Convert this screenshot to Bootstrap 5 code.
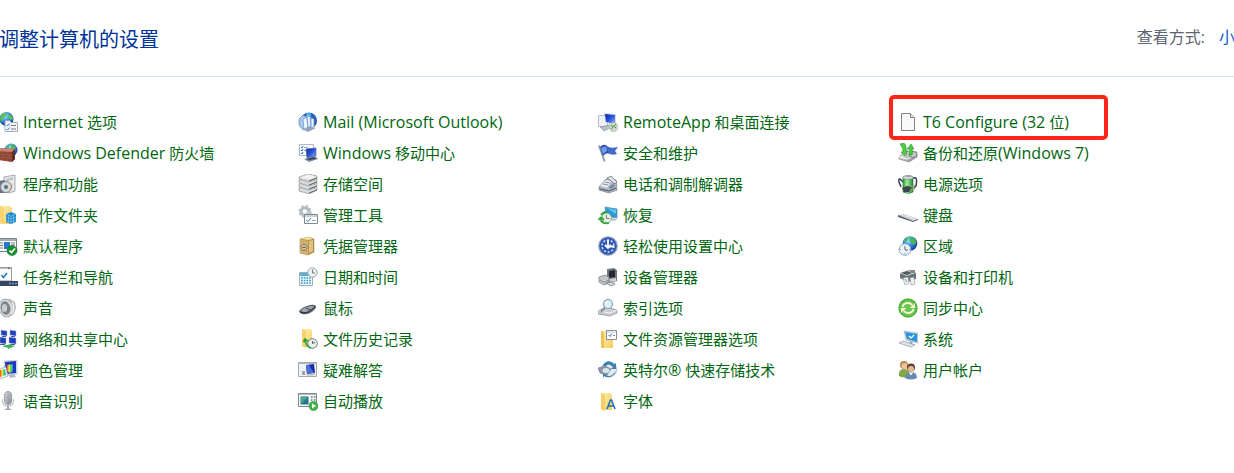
<!DOCTYPE html>
<html lang="zh-CN">
<head>
<meta charset="utf-8">
<meta name="viewport" content="width=device-width, initial-scale=1">
<title>控制面板</title>
<link href="https://cdn.jsdelivr.net/npm/bootstrap@5.3.0/dist/css/bootstrap.min.css" rel="stylesheet">
<style>
  body { font-family: "Open Sans", "Noto Sans CJK SC", sans-serif; font-size: 15px; overflow-x: hidden; }
  .panel-head { height: 77px; border-bottom: 1px solid #d6e5f3; overflow: hidden; }
  .panel-head h1 { font-size: 20px; line-height: 24px; color: #003399; margin-left: -1px; padding-top: 3px; }
  .view-by { font-size: 16px; line-height: 24px; color: #5a6472; gap: 14px; margin-right: -1px; padding-bottom: 2px; }
  .view-by a { color: #0a5bc8; }
  .cpl-grid { display: grid; grid-template-columns: repeat(auto-fill, 300px); grid-auto-rows: 31px; margin: 30px 0 0 -2px; }
  .cpl-grid a { color: #00660f; gap: 5px; line-height: 30px; }
  .cpl-grid a:hover { text-decoration: underline !important; }
  .cpl-grid svg { width: 20px; height: 20px; flex: none; }
  .latin { font-size: 16px; }
  .marked::after { content: ""; position: absolute; left: -9px; top: -12px; width: 219px; height: 45px; border: 4px solid #ff2418; border-radius: 5px; pointer-events: none; }
</style>
</head>
<body class="bg-white">
<svg width="0" height="0" class="position-absolute" aria-hidden="true">
  <defs>
    <radialGradient id="globe" cx=".4" cy=".3" r=".7"><stop offset="0" stop-color="#9be0ff"/><stop offset=".5" stop-color="#2f8fdc"/><stop offset="1" stop-color="#123c9c"/></radialGradient>
    <linearGradient id="metal" x1="0" y1="0" x2="1" y2="1"><stop offset="0" stop-color="#f4f4f4"/><stop offset="1" stop-color="#85888c"/></linearGradient>
    <linearGradient id="screen" x1="0" y1="0" x2="1" y2="1"><stop offset="0" stop-color="#0a1f9e"/><stop offset=".5" stop-color="#2b56dc"/><stop offset="1" stop-color="#8db8ff"/></linearGradient>
    <linearGradient id="folder" x1="0" y1="0" x2="1" y2="1"><stop offset="0" stop-color="#fff0b4"/><stop offset="1" stop-color="#f5cc5c"/></linearGradient>
    <linearGradient id="rainbow"><stop offset="0" stop-color="#f33"/><stop offset=".35" stop-color="#fe3"/><stop offset=".65" stop-color="#3d6"/><stop offset="1" stop-color="#38f"/></linearGradient>
    <linearGradient id="green"><stop offset="0" stop-color="#2d9a36"/><stop offset=".4" stop-color="#a5eaa0"/><stop offset="1" stop-color="#238a30"/></linearGradient>
  </defs>
</svg>

<header class="panel-head d-flex justify-content-between align-items-center">
  <h1 class="mb-0 fw-normal text-nowrap">调整计算机的设置</h1>
  <div class="view-by d-flex text-nowrap"><span>查看方式:</span><a href="#" class="text-decoration-none">小</a></div>
</header>

<main>
<ul class="cpl-grid list-unstyled">
  <li><a href="#" class="d-flex align-items-center text-decoration-none text-nowrap">
    <svg viewBox="0 0 20 20"><circle cx="8.500" cy="7" r="7" fill="url(#globe)"/><path d="M3 3q3-3 6-2l-1 3-3 2-1 4-2-2zM10 2l4 2 1 4-4-1z" fill="#63bd57"/><path d="M7 8.500h5l1 2h6.500v9H7z" fill="#f2f5f8" stroke="#8d9aa8" stroke-width=".8"/><path d="M8.500 13l1 1 2-2.500M8.500 17l1 1 2-2.500" stroke="#2879d0" fill="none"/><path d="M13 13.500h5M13 17h5" stroke="#778"/></svg>
    <span><span class="latin">Internet</span> 选项</span></a></li>
  <li><a href="#" class="d-flex align-items-center text-decoration-none text-nowrap">
    <svg viewBox="0 0 20 20"><circle cx="11" cy="8.500" r="8" fill="url(#globe)"/><path d="M13 1q4 2 5 6l-2 5-3-4zM4 4l4-3 1 3z" fill="#2f60b4"/><path d="M1 7l4-4 3 2v11l-3 2-4-5z" fill="#a8c7ea" stroke="#5e84b8" stroke-width=".7"/><path d="M5 7l4-2 1 10-4 3zM9 5l3-1 1 10-3 2zM13 6l3 1v8l-3 2z" fill="#e8f4ff" stroke="#6f94c6" stroke-width=".7"/><path d="M4 17l9-2 5 1-8 4z" fill="#94a4b8"/></svg>
    <span class="latin">Mail (Microsoft Outlook)</span></a></li>
  <li><a href="#" class="d-flex align-items-center text-decoration-none text-nowrap">
    <svg viewBox="0 0 20 20"><path d="M.5 3.500h9v11h-9z" fill="#eef1f7" stroke="#b6bdcb"/><path d="M6 1l12 1v11L7 11z" fill="#d8dce8"/><path d="M7 2l10 1v9L8 10z" fill="url(#screen)"/><path d="M2 15l9-2 3 2-8 4z" fill="#b9bfca" stroke="#858b98" stroke-width=".6"/><circle cx="15.500" cy="15" r="4.500" fill="#cfd4cf" stroke="#a2a8a2" stroke-width=".6"/><path d="M13 13l2.200 2-2.200 2M18 12l-2.200 2 2.200 2" fill="none" stroke="#3c9c36"/></svg>
    <span><span class="latin">RemoteApp</span> 和桌面连接</span></a></li>
  <li class="position-relative marked"><a href="#" class="d-flex align-items-center text-decoration-none text-nowrap">
    <svg viewBox="0 0 20 20"><path d="M3.500 1.500h9l4 4v13h-13z" fill="#f8f8f8" stroke="#858585"/><path d="M12.500 1.500v4h4" fill="#e4e4e4" stroke="#858585"/></svg>
    <span><span class="latin">T6 Configure (32</span> 位<span class="latin">)</span></span></a></li>

  <li><a href="#" class="d-flex align-items-center text-decoration-none text-nowrap">
    <svg viewBox="0 0 20 20"><circle cx="13" cy="7" r="6.500" fill="url(#globe)"/><path d="M13 1l5 3-2 5-3-3zM8 4l3-3v4z" fill="#57b74d"/><path d="M0 8l3-3 14 1v10l-3 3-14-2z" fill="#8d4535"/><path d="M0 8l3-3 14 1-3 3z" fill="#c98672"/><path d="M14 9l3-3v10l-3 3z" fill="#612d24"/><path d="M0 11l14 1M0 14l14 1M4 8v3M9 9v3M6 12v3M11 12v3M4 15v2M9 15v3" stroke="#a8604f" stroke-width=".6"/></svg>
    <span><span class="latin">Windows Defender</span> 防火墙</span></a></li>
  <li><a href="#" class="d-flex align-items-center text-decoration-none text-nowrap">
    <svg viewBox="0 0 20 20"><path d="M1.500 1.500h14v11h-14z" fill="#f7faff" stroke="#adb8c8"/><path d="M3 4l1 1 1-2M3 7l1 1 1-2M3 10l1 1 1-2" stroke="#2871d0" fill="none"/><path d="M6 4.500h4M6 7.500h3" stroke="#8cb0d8"/><path d="M8 6l10-1v8l-9 2z" fill="url(#screen)" stroke="#53617c" stroke-width=".7"/><path d="M6 16l11-3 3 3-9 3z" fill="#7d8ba2"/><path d="M8 16l8-2 2 2-7 1z" fill="#3a4964"/></svg>
    <span><span class="latin">Windows</span> 移动中心</span></a></li>
  <li><a href="#" class="d-flex align-items-center text-decoration-none text-nowrap">
    <svg viewBox="0 0 20 20"><path d="M0 3l1.500-1 6 16-1.500 1z" fill="#8b95a5"/><path d="M2 4q4-4 7-1l3 8q-4-2-7 2z" fill="#2749b1"/><path d="M9 3q3 3 11 1l-3 4 2 3q-5 2-9-1z" fill="#4369c9"/><path d="M3 5l5-2 1 5-4 3z" fill="#6f9cec"/></svg>
    安全和维护</a></li>
  <li><a href="#" class="d-flex align-items-center text-decoration-none text-nowrap">
    <svg viewBox="0 0 20 20"><path d="M1 14l7-6 11 1v5l-8 5-10-3z" fill="url(#metal)" stroke="#73777c" stroke-width=".6"/><path d="M1 14l9 2 9-6" fill="none" stroke="#fff"/><ellipse cx="15" cy="11.500" rx="4" ry="3" fill="#c4c8cb" stroke="#666" stroke-width=".7"/><path d="M2 1l4-1q3 3 2 8h2l-3 5-4-4h2Q5 4 2 1zM13 1l3 5h-2q1 3 0 6h-3q2-3 0-6H9z" fill="#4fcb43" stroke="#239522" stroke-width=".6"/></svg>
    <span>备份和还原<span class="latin">(Windows 7)</span></span></a></li>

  <li><a href="#" class="d-flex align-items-center text-decoration-none text-nowrap">
    <svg viewBox="0 0 20 20"><path d="M6 3l11-2v16l-6 2-5-3z" fill="#e7eaed" stroke="#8e969e" stroke-width=".8"/><path d="M8 5l7-2v3l-7 1z" fill="#bcc3ca"/><path d="M1 7l6-1v13H1z" fill="#66717c"/><circle cx="8" cy="13" r="5.500" fill="#d3d8dc" stroke="#7d868e"/><circle cx="8" cy="13" r="2" fill="#55707e"/><path d="M12 9l2 3-2 4" stroke="#e6894d" fill="none"/></svg>
    程序和功能</a></li>
  <li><a href="#" class="d-flex align-items-center text-decoration-none text-nowrap">
    <svg viewBox="0 0 20 20"><g fill="#d8d9da" stroke="#85878a" stroke-width=".6"><path d="M1 14l9-3 9 2v3l-8 4-10-3z"/><path d="M1 10l9-3 9 2v3l-8 4-10-3z"/><path d="M1 6l9-3 9 2v3l-8 4-10-3z"/><path d="M1 3l9-3 9 2v2l-8 4-10-3z"/></g><path d="M2 3.500l8-3 8 2-7 3z" fill="#f3f3f3"/><path d="M11 7l8-3M11 11l8-3M11 15l8-3M11 19l8-3" stroke="#606366"/><path d="M16 6.500h1M16 10.500h1M16 14.500h1" stroke="#55cb45"/></svg>
    存储空间</a></li>
  <li><a href="#" class="d-flex align-items-center text-decoration-none text-nowrap">
    <svg viewBox="0 0 20 20"><path d="M1 13l7-8 10 1 1 10-8 3-10-3z" fill="#aeb5bf" stroke="#777f89" stroke-width=".7"/><path d="M2 12l6-6 6 1-5 7z" fill="#e3e9ef"/><path d="M7 8l5 1M5 10l5 1" stroke="#8998a8"/><path d="M9 4l4-2 6 6-2 2z" fill="#dde1e5" stroke="#60656c" stroke-width=".7"/><path d="M2 15l9 2 7-3" fill="none" stroke="#4d5864"/><path d="M11 13l4-3 2 2-4 3z" fill="#6989aa"/></svg>
    电话和调制解调器</a></li>
  <li><a href="#" class="d-flex align-items-center text-decoration-none text-nowrap">
    <svg viewBox="0 0 20 20"><path d="M5 8Q0 2 1 8l2 5M15 4q5-2 3 8l-2 2" fill="none" stroke="#37404b" stroke-width="1.500"/><path d="M5 3h10v15q-5 3-10 0z" fill="url(#green)" stroke="#337044" stroke-width=".6"/><ellipse cx="10" cy="3.500" rx="5" ry="2" fill="#d5e3d5" stroke="#668" stroke-width=".6"/><path d="M8 1h5v2H8z" fill="#9aa6a4"/><path d="M4 14l5-2 5 1-3 5-5 0z" fill="#3c444b"/><path d="M12 13l5-2M12 16l5-1" stroke="#a69d74"/></svg>
    电源选项</a></li>

  <li><a href="#" class="d-flex align-items-center text-decoration-none text-nowrap">
    <svg viewBox="0 0 20 20"><path d="M2 1h9q3 0 3 3v15H2z" fill="url(#folder)"/><path d="M2 1l4 2v16l-4-2z" fill="#f8d46e"/><path d="M8 9l5-2 5 2v8l-5 2-5-2z" fill="#2489ca"/><path d="M8 9l5 2 5-2M13 11v8M8 12l5 2 5-2M8 15l5 2 5-2M10.500 10v8M15.500 10v8" fill="none" stroke="#8bd5fa" stroke-width=".5"/></svg>
    工作文件夹</a></li>
  <li><a href="#" class="d-flex align-items-center text-decoration-none text-nowrap">
    <svg viewBox="0 0 20 20"><circle cx="7" cy="6.500" r="3.800" fill="none" stroke="#b3bbc3" stroke-width="3"/><circle cx="7" cy="6.500" r="5.500" fill="none" stroke="#b3bbc3" stroke-width="2" stroke-dasharray="2.300 2.020"/><circle cx="11" cy="12" r="4" fill="none" stroke="#c4cad0" stroke-width="2"/><path d="M6.500 9.500h13v9h-13z" fill="#fff" stroke="#7e8790"/><path d="M7 11h12" stroke="#9ca3aa"/><path d="M8.500 15l1.500 1.500 3-3.500" fill="none" stroke="#2879d0"/><path d="M14 15.500h4" stroke="#aaa"/></svg>
    管理工具</a></li>
  <li><a href="#" class="d-flex align-items-center text-decoration-none text-nowrap">
    <svg viewBox="0 0 20 20"><path d="M7 2l12 2v9L8 11z" fill="#289ad6" stroke="#6389a0" stroke-width=".7"/><path d="M9 3l9 2v4z" fill="#65c6f0"/><path d="M12 14l4-1 4 2-5 1z" fill="#bcc2c8"/><circle cx="8.500" cy="13" r="5" fill="#e7efe4" stroke="#7b8f7d" stroke-width=".8"/><path d="M8.500 10v3.500h3" fill="none" stroke="#687"/><path d="M2 13q2 7 9 5M3 12l-2.500 3M3 12l3 3M3 10q2-3 6-3" stroke="#31a53a" stroke-width="1.800" fill="none"/></svg>
    恢复</a></li>
  <li><a href="#" class="d-flex align-items-center text-decoration-none text-nowrap">
    <svg viewBox="0 0 20 20"><path d="M0 10l6-1 14 5-5 2z" fill="#c3c7cc"/><path d="M0 10l15 6v1L0 12zM15 16l5-2v1l-5 2z" fill="#555e68"/><path d="M4 10l12 4.500M7 10l10 4" stroke="#eef2f5" stroke-dasharray="1.500 .7"/></svg>
    键盘</a></li>

  <li><a href="#" class="d-flex align-items-center text-decoration-none text-nowrap">
    <svg viewBox="0 0 20 20"><path d="M.5 2.500h18v13H.5z" fill="#fff" stroke="#79828b"/><path d="M1 4h17" stroke="#a6adb4" stroke-width="2"/><path d="M2 7h3M2 9.500h3M2 12h3M13 7h4M13 9h4" stroke="#6c7780"/><path d="M6 6h6v7H6z" fill="#2977cb"/><circle cx="14" cy="14.500" r="5" fill="#169331" stroke="#0b6c22" stroke-width=".6"/><path d="M11.500 14.500l2 2 3.500-4" stroke="#fff" stroke-width="1.600" fill="none"/></svg>
    默认程序</a></li>
  <li><a href="#" class="d-flex align-items-center text-decoration-none text-nowrap">
    <svg viewBox="0 0 20 20"><path d="M2 3l9-2 5 2v13l-6 3-8-2z" fill="#b89652" stroke="#95712c" stroke-width=".5"/><path d="M2 3l8 2v14l-8-2z" fill="#cfb06c"/><path d="M3 2.500l8-1.500 4 2-5 1z" fill="#f4dfa0"/><circle cx="6" cy="11.500" r="3" fill="#efe6cc" stroke="#67583a" stroke-width=".8"/><path d="M6 9.500v4M4 11.500h4" stroke="#67583a" stroke-width=".8"/><path d="M11 5l4-1v11l-4 2z" fill="#e0c27c"/></svg>
    凭据管理器</a></li>
  <li><a href="#" class="d-flex align-items-center text-decoration-none text-nowrap">
    <svg viewBox="0 0 20 20"><circle cx="10" cy="10" r="9.200" fill="#2d58b5" stroke="#8d9db9" stroke-width="1.200"/><circle cx="10" cy="10" r="6" fill="none" stroke="#dce8ff" stroke-width="1.500" stroke-dasharray="2 1.800"/><path d="M10 4v8M7 9l3 3 3-3M10 10.500h6" fill="none" stroke="#fff" stroke-width="1.800"/></svg>
    轻松使用设置中心</a></li>
  <li><a href="#" class="d-flex align-items-center text-decoration-none text-nowrap">
    <svg viewBox="0 0 20 20"><circle cx="12" cy="7.500" r="7.300" fill="url(#globe)"/><path d="M13 1l4 2 1 4-3 2-2-3-2-2zM6 4l3-3 1 3-3 2z" fill="#4fb84b"/><circle cx="7" cy="13.500" r="5.800" fill="#edf4f9" stroke="#8aa0b2"/><path d="M7 10v4h3" fill="none" stroke="#53687b"/><path d="M2 13.500h1M7 17v1M11 13.500h1" stroke="#8aa0b2"/></svg>
    区域</a></li>

  <li><a href="#" class="d-flex align-items-center text-decoration-none text-nowrap">
    <svg viewBox="0 0 20 20"><path d="M0 .5h13.500V14H0z" fill="#fafafa" stroke="#969ca3"/><path d="M0 1.500h13" stroke="#bbc1c7"/><path d="M10 1h2v1h-2z" fill="#d43a36"/><path d="M3.500 8l2 2.500L9 6" stroke="#2077c7" stroke-width="1.500" fill="none"/><path d="M0 14h20v5H0z" fill="#354767"/><path d="M11 16.500h2M14 16.500h2M17 16.500h2" stroke="#7f97b4" stroke-width="1.500"/></svg>
    任务栏和导航</a></li>
  <li><a href="#" class="d-flex align-items-center text-decoration-none text-nowrap">
    <svg viewBox="0 0 20 20"><path d="M1.500 5.500h13v13h-13z" fill="#f5fafc" stroke="#9eafba"/><path d="M2 6h12v3H2z" fill="#57add6"/><path d="M3 11h10M3 13.500h10M3 16h10" stroke="#2e9cc9" stroke-width="1.500" stroke-dasharray="1.700 1"/><circle cx="14.500" cy="5.500" r="4.700" fill="#f0f1f2" stroke="#9ba2a8"/><path d="M14.500 2.500v3.500H17" stroke="#687d8e" fill="none"/></svg>
    日期和时间</a></li>
  <li><a href="#" class="d-flex align-items-center text-decoration-none text-nowrap">
    <svg viewBox="0 0 20 20"><path d="M9 2l7-1 3 2v11l-7 2-3-3z" fill="#747a7f"/><path d="M11 4l6-1v7l-6 1z" fill="#25292d"/><path d="M11 12l7-1v3l-6 1z" fill="#cbd0d3"/><path d="M1 10l6-2 4 2v6l-5 2-5-3z" fill="#c2c6c9" stroke="#73787c" stroke-width=".7"/><path d="M2 13l4 2 5-2M8 16l5-1 4 2-4 2z" fill="#d9dcde" stroke="#676c70" stroke-width=".7"/></svg>
    设备管理器</a></li>
  <li><a href="#" class="d-flex align-items-center text-decoration-none text-nowrap">
    <svg viewBox="0 0 20 20"><path d="M2 7l9-4 7 3v6l-8 3-8-4z" fill="#6c7175"/><path d="M1 6l9-3 8 3-9 3z" fill="#c6c9cb"/><path d="M3 6l6-2 5 2-5 2z" fill="#565a5d"/><path d="M5 11l5-1 1 6-4 2zM12 11l4-1 1 7-4 1z" fill="#f0f1f2" stroke="#8d9296" stroke-width=".6"/><path d="M7 12l2 3" stroke="#57a4cb"/><path d="M12 3h5v3h-5z" fill="#858a8f"/></svg>
    设备和打印机</a></li>

  <li><a href="#" class="d-flex align-items-center text-decoration-none text-nowrap">
    <svg viewBox="0 0 20 20"><path d="M5 2l7-1 5 3 1 6-2 6-5 3-6-2z" fill="#b9bdc0"/><ellipse cx="8" cy="10" rx="7" ry="9" transform="rotate(-12 8 10)" fill="#d9dcde" stroke="#8b9094" stroke-width=".7"/><ellipse cx="7.500" cy="10" rx="4.800" ry="6.800" transform="rotate(-12 8 10)" fill="#7d8387"/><ellipse cx="6.500" cy="10" rx="2.700" ry="4" fill="#c9cdd0"/><path d="M14 4q3 6 0 12" fill="none" stroke="#f1f2f2" stroke-width="1.500"/></svg>
    声音</a></li>
  <li><a href="#" class="d-flex align-items-center text-decoration-none text-nowrap">
    <svg viewBox="0 0 20 20"><path d="M1 13Q4 9 12 7q6-1 6 2 0 2-6 6-4 2-8 1-3-1-3-3z" fill="#5a6068"/><path d="M3 12q4-3 10-4 4 0 3 2l-6 4q-3 1-7-1z" fill="#9da5ae"/><path d="M2 14q4 2 8 0l7-5" stroke="#2c3035" fill="none"/><path d="M8 10l4 2" stroke="#3c4249"/></svg>
    鼠标</a></li>
  <li><a href="#" class="d-flex align-items-center text-decoration-none text-nowrap">
    <svg viewBox="0 0 20 20"><path d="M0 13l8-4 11 3v3l-7 3-12-2z" fill="#c8ccd0" stroke="#858b91" stroke-width=".7"/><path d="M1 13l11 2 7-3" fill="none" stroke="#f3f4f5"/><circle cx="10" cy="6" r="4.500" fill="#d9effc" stroke="#8a9eb0" stroke-width="1.200"/><path d="M7 9.500l-4 4.500" stroke="#8893a0" stroke-width="2"/><path d="M7.500 6q0-2.500 2.500-2.500" fill="none" stroke="#fff" stroke-width="1.200"/></svg>
    索引选项</a></li>
  <li><a href="#" class="d-flex align-items-center text-decoration-none text-nowrap">
    <svg viewBox="0 0 20 20"><circle cx="10" cy="10" r="9.700" fill="#4eb53e"/><circle cx="10" cy="10" r="8" fill="#69c455"/><path d="M4.500 9Q5.500 5 10 5q2.500 0 4 2M15.500 11Q14.500 15 10 15q-2.500 0-4-2" stroke="#fbf8cf" stroke-width="2" fill="none"/><path d="M17 5v5h-5.500zM3 15v-5h5.500z" fill="#fbf8cf"/></svg>
    同步中心</a></li>

  <li><a href="#" class="d-flex align-items-center text-decoration-none text-nowrap">
    <svg viewBox="0 0 20 20"><g fill="#1f3fc0" stroke="#a9b2d4" stroke-width=".5"><path d="M3 1l6 1v5l-6-1z"/><path d="M12 1l6 1v5l-6-1z"/><path d="M2 8l6 1v6l-6-1z"/><path d="M11 8l7 1v6l-7-1z"/></g><path d="M4 7.500h4M13 7.500h4M2 15.500h5M12 15.500h5" stroke="#4d5a94"/><path d="M4 17l9-2v1l4 1-7 3v-1z" fill="#3cb65c"/></svg>
    网络和共享中心</a></li>
  <li><a href="#" class="d-flex align-items-center text-decoration-none text-nowrap">
    <svg viewBox="0 0 20 20"><path d="M4 0h7q3 0 3 3v15H4z" fill="url(#folder)"/><path d="M4 0l4 2v17l-4-2z" fill="#f6d16b"/><circle cx="14.500" cy="14.500" r="4.800" fill="#e9eeeb" stroke="#6f7c76"/><path d="M14.500 12v2.500l2.500-1" fill="none" stroke="#53605a"/><path d="M7 11q1 7 6 8M5.500 13l1.500-3 3 2.500" fill="none" stroke="#29a33a" stroke-width="1.700"/></svg>
    文件历史记录</a></li>
  <li><a href="#" class="d-flex align-items-center text-decoration-none text-nowrap">
    <svg viewBox="0 0 20 20"><path d="M3 2h12v17H3z" fill="url(#folder)"/><path d="M3 2l3 1v16H3z" fill="#edc35b"/><path d="M8.500 1.500h10v9h-10z" fill="#fff" stroke="#858c93"/><path d="M9 3h9" stroke="#c5cbd0"/><path d="M10.500 6l1.500 1.500 2-3" stroke="#2778c9" fill="none"/><path d="M15 6.500h2" stroke="#888"/></svg>
    文件资源管理器选项</a></li>
  <li><a href="#" class="d-flex align-items-center text-decoration-none text-nowrap">
    <svg viewBox="0 0 20 20"><path d="M6 2l14 2v10L8 11z" fill="#d4dae0" stroke="#8a96a3" stroke-width=".5"/><path d="M7 3l12 2v8L9 10z" fill="#2492dc"/><path d="M11 7l2 2 3-3" stroke="#fff" stroke-width="1.300" fill="none"/><path d="M12 12l3 1-1 2h-3z" fill="#9da7b1"/><path d="M1 14l4-2 12 4-4 2z" fill="#e0e4e8" stroke="#909ba6" stroke-width=".7"/></svg>
    系统</a></li>

  <li><a href="#" class="d-flex align-items-center text-decoration-none text-nowrap">
    <svg viewBox="0 0 20 20"><path d="M6 1l13-1v14l-12 2z" fill="#dadfea" stroke="#a4adbd" stroke-width=".5"/><path d="M7 2l11-1v12L8 14z" fill="#1e37bb"/><path d="M9 5l6-1v7l-3 2-3-2z" fill="url(#rainbow)"/><path d="M1 9l7-2 2 9-8 3z" fill="#f1f2f6" stroke="#8d98a8" stroke-width=".6"/><path d="M2 10l5-1 1 6-6 2z" fill="url(#rainbow)"/><path d="M11 15l5-1 2 3-6 1z" fill="#b4bbc8"/></svg>
    颜色管理</a></li>
  <li><a href="#" class="d-flex align-items-center text-decoration-none text-nowrap">
    <svg viewBox="0 0 20 20"><path d="M.5 2.500h18v14H.5z" fill="#f0f1f3" stroke="#a4a9af"/><path d="M1 3.500h17" stroke="#b2b8be"/><path d="M8 5l8-1 1 9-8 1z" fill="#1629a6"/><path d="M8 5l3 0 5 8-7 1z" fill="#4c70d8"/><path d="M4 11h3v4H4z" fill="#a0a5aa"/><path d="M7 14.500l9-1 2 1.500-8 1z" fill="#c3c8cf"/></svg>
    疑难解答</a></li>
  <li><a href="#" class="d-flex align-items-center text-decoration-none text-nowrap">
    <svg viewBox="0 0 20 20"><circle cx="11" cy="9.500" r="7.500" fill="#e2e9ef" stroke="#a4b2bf"/><path d="M5 5Q10-2 16 4l2-1v6h-5l2-2Q10 2 7 7zM18 12Q12 20 6 16l-1 2v-6h5l-2 3q5 3 8-2z" fill="#3b83b5"/><path d="M0 8l7-2 6 3-4 6-7-2z" fill="#8a98a8" stroke="#65778a" stroke-width=".6"/><ellipse cx="8" cy="10.500" rx="3.500" ry="2.500" fill="#dbe3ea"/></svg>
    <span>英特尔<span class="latin">®</span> 快速存储技术</span></a></li>
  <li><a href="#" class="d-flex align-items-center text-decoration-none text-nowrap">
    <svg viewBox="0 0 20 20"><circle cx="6" cy="5" r="4" fill="#b78749"/><circle cx="6.500" cy="6" r="3" fill="#edc499"/><path d="M1 16q-1-7 5-7t6 7q-5 3-11 0z" fill="#83a84b"/><circle cx="13" cy="7.500" r="4" fill="#5c4233"/><circle cx="13" cy="9" r="3" fill="#e9b88e"/><path d="M7 18q0-6 6-6t6 6q-6 3-12 0z" fill="#668ba9"/><path d="M11 12.500l2 3 2-3z" fill="#fff"/></svg>
    用户帐户</a></li>

  <li><a href="#" class="d-flex align-items-center text-decoration-none text-nowrap">
    <svg viewBox="0 0 20 20"><path d="M4.500 8v2q0 5 5.500 5t5.500-5V8" stroke="#c1c5cb" stroke-width="1.300" fill="none"/><rect x="6.500" y=".5" width="7" height="13" rx="3.500" fill="url(#metal)" stroke="#858a93" stroke-width=".8"/><path d="M7 4h6M7 6.500h6M7 9h6M10 1v12" stroke="#8b919b" stroke-width=".6"/><path d="M9 15h2v2l3 2H6l3-2z" fill="#a0a5ac"/></svg>
    语音识别</a></li>
  <li><a href="#" class="d-flex align-items-center text-decoration-none text-nowrap">
    <svg viewBox="0 0 20 20"><path d="M.5 2.500h18v13H.5z" fill="#f5f6f6" stroke="#7f878d"/><path d="M1 3.500h17" stroke="#b8bdc1"/><path d="M2.500 5.500h8v8h-8z" fill="#25778e"/><path d="M3 6h7l-7 7z" fill="#4aa58e"/><path d="M13 6h1.500M16 6h1.500M13 9h1.500M16 9h1.500" stroke="#5f7786" stroke-width="1.500"/><circle cx="15.500" cy="15" r="4.500" fill="#42b647" stroke="#259135" stroke-width=".6"/><path d="M14 12.500l4 2.500-4 2.500z" fill="#fff"/></svg>
    自动播放</a></li>
  <li><a href="#" class="d-flex align-items-center text-decoration-none text-nowrap">
    <svg viewBox="0 0 20 20"><path d="M3 2h9q2 0 2 3v14H3z" fill="url(#folder)"/><path d="M3 2l4 2v16l-4-2z" fill="#f5ce66"/><path d="M9 18l3.500-9h1l3.500 9M10.500 15h5" fill="none" stroke="#2370b9" stroke-width="1.600"/></svg>
    字体</a></li>
</ul>
</main>
<script src="https://cdn.jsdelivr.net/npm/bootstrap@5.3.0/dist/js/bootstrap.bundle.min.js"></script>
</body>
</html>
